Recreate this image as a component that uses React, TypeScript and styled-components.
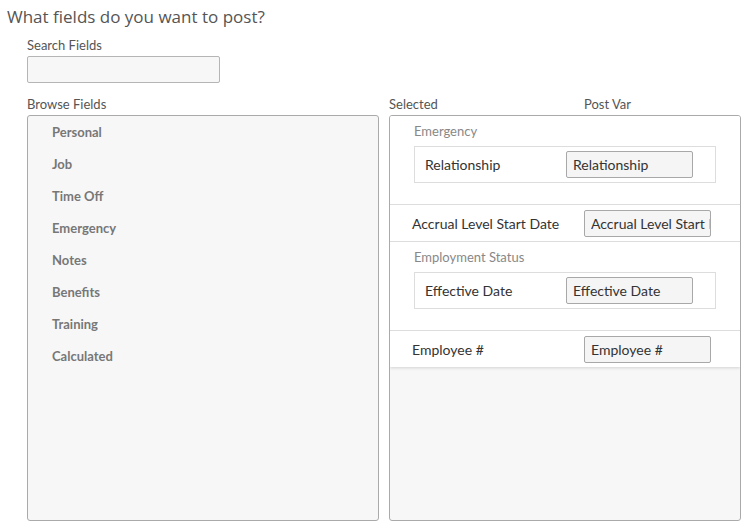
import React from "react";
import styled, { createGlobalStyle } from "styled-components";

const GlobalStyle = createGlobalStyle`
  html, body {
    margin: 0;
    padding: 0;
    background: #ffffff;
  }
  body {
    font-family: "Lato", "Liberation Sans", sans-serif;
  }
  * {
    box-sizing: border-box;
  }
`;

const Page = styled.div`
  width: 755px;
  height: 528px;
  padding: 6px 0 0 7px;
  background: #fff;
`;

const Title = styled.h1`
  margin: 0;
  font-family: "Open Sans", "Liberation Sans", sans-serif;
  font-weight: 400;
  font-size: 17px;
  line-height: 22px;
  color: #555;
`;

const Form = styled.div`
  padding-left: 20px;
  margin-top: 9px;
  display: flex;
  flex-direction: column;
`;

const FieldLabel = styled.div`
  font-size: 13px;
  line-height: 16px;
  color: #555;
`;

const SearchInput = styled.input`
  margin-top: 3px;
  width: 193px;
  height: 27px;
  border: 1px solid #b5b5b5;
  border-radius: 2px;
  background: #f7f7f7;
  outline: none;
`;

const Columns = styled.div`
  margin-top: 13px;
  display: grid;
  grid-template-columns: 352px 352px;
  column-gap: 10px;
`;

const Column = styled.div`
  display: flex;
  flex-direction: column;
`;

const HeaderRow = styled.div`
  display: flex;
  height: 16px;
  margin-bottom: 3px;
`;

const HeaderCell = styled(FieldLabel)<{ $width?: number }>`
  width: ${(p) => (p.$width ? `${p.$width}px` : "auto")};
`;

const Panel = styled.div`
  height: 406px;
  border: 1px solid #aaa;
  border-radius: 3px;
  background: #f7f7f7;
  overflow: hidden;
`;

const BrowseItem = styled.div`
  height: 32px;
  padding-left: 24px;
  display: flex;
  align-items: center;
  font-size: 13px;
  font-weight: 700;
  color: #777;
`;

const SelectedList = styled.div`
  background: #fff;
  box-shadow: 0 1px 3px rgba(0, 0, 0, 0.15);
`;

const Group = styled.div`
  padding: 7px 24px 21px 24px;
  border-bottom: 1px solid #ddd;
`;

const GroupTitle = styled.div`
  font-size: 13px;
  line-height: 16px;
  color: #888;
  margin-bottom: 7px;
`;

const GroupBox = styled.div`
  height: 37px;
  border: 1px solid #ddd;
  padding-left: 10px;
  display: flex;
  align-items: center;
`;

const Row = styled.div<{ $last?: boolean }>`
  height: ${(p) => (p.$last ? "36px" : "37px")};
  padding-left: 22px;
  display: flex;
  align-items: center;
  border-bottom: ${(p) => (p.$last ? "none" : "1px solid #ddd")};
`;

const RowLabel = styled.div<{ $width: number }>`
  width: ${(p) => p.$width}px;
  font-size: 14px;
  color: #333;
  white-space: nowrap;
`;

const VarInput = styled.input`
  width: 127px;
  height: 27px;
  border: 1px solid #a8a8a8;
  border-radius: 2px;
  background: #f5f5f5;
  padding: 0 0 0 6px;
  font-family: "Lato", "Liberation Sans", sans-serif;
  font-size: 14px;
  color: #333;
  outline: none;
`;

const browse = [
  "Personal",
  "Job",
  "Time Off",
  "Emergency",
  "Notes",
  "Benefits",
  "Training",
  "Calculated",
];

type Selected =
  | { kind: "group"; title: string; label: string; value: string }
  | { kind: "row"; label: string; value: string };

const selected: Selected[] = [
  { kind: "group", title: "Emergency", label: "Relationship", value: "Relationship" },
  { kind: "row", label: "Accrual Level Start Date", value: "Accrual Level Start Date" },
  { kind: "group", title: "Employment Status", label: "Effective Date", value: "Effective Date" },
  { kind: "row", label: "Employee #", value: "Employee #" },
];

export default function App() {
  return (
    <Page>
      <GlobalStyle />
      <Title>What fields do you want to post?</Title>
      <Form>
        <FieldLabel>Search Fields</FieldLabel>
        <SearchInput />
        <Columns>
          <Column>
            <HeaderRow>
              <HeaderCell>Browse Fields</HeaderCell>
            </HeaderRow>
            <Panel>
              {browse.map((b) => (
                <BrowseItem key={b}>{b}</BrowseItem>
              ))}
            </Panel>
          </Column>
          <Column>
            <HeaderRow>
              <HeaderCell $width={195}>Selected</HeaderCell>
              <HeaderCell>Post Var</HeaderCell>
            </HeaderRow>
            <Panel>
              <SelectedList>
                {selected.map((s, i) =>
                  s.kind === "group" ? (
                    <Group key={i}>
                      <GroupTitle>{s.title}</GroupTitle>
                      <GroupBox>
                        <RowLabel $width={141}>{s.label}</RowLabel>
                        <VarInput readOnly value={s.value} />
                      </GroupBox>
                    </Group>
                  ) : (
                    <Row key={i} $last={i === selected.length - 1}>
                      <RowLabel $width={172}>{s.label}</RowLabel>
                      <VarInput readOnly value={s.value} />
                    </Row>
                  )
                )}
              </SelectedList>
            </Panel>
          </Column>
        </Columns>
      </Form>
    </Page>
  );
}
